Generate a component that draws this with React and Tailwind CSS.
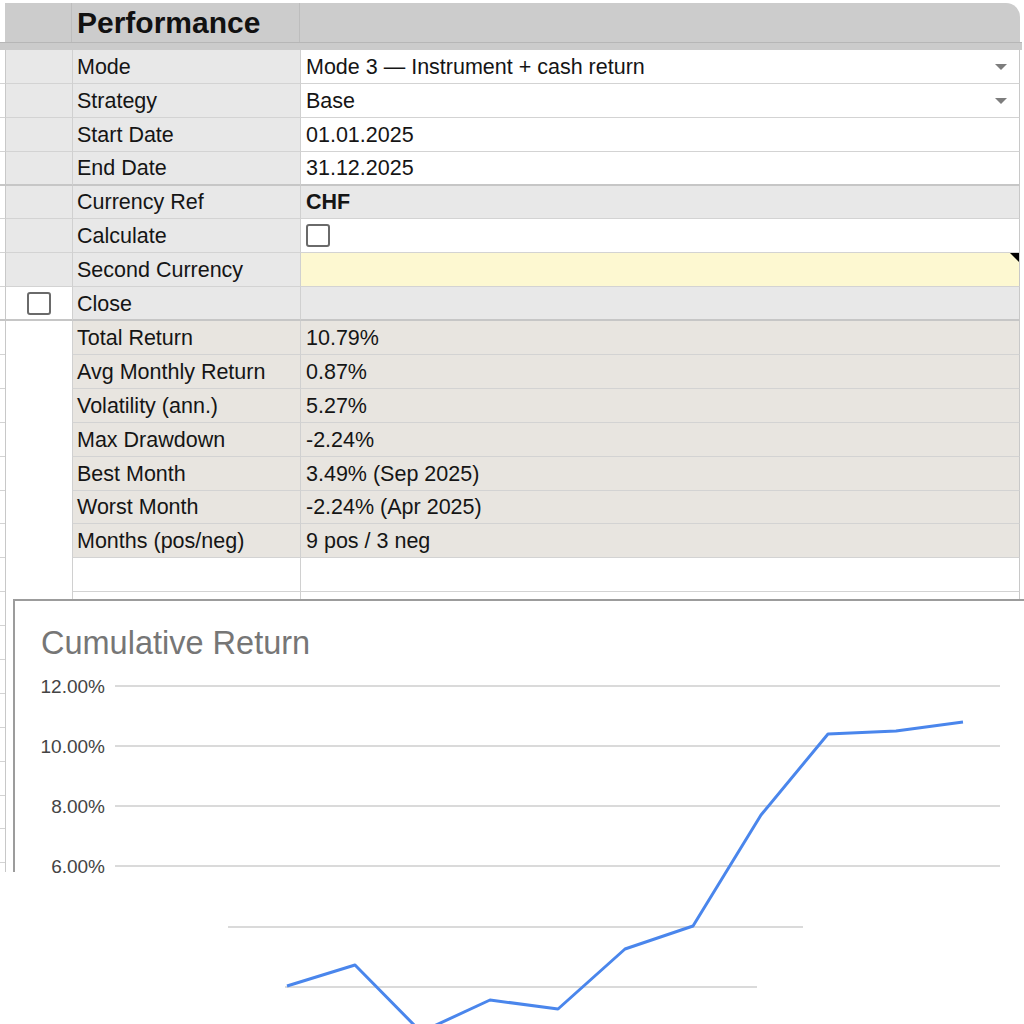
import React from 'react'

const FONT = "font-['Liberation_Sans',Arial,sans-serif]"

function Checkbox() {
  return <div className="h-[23px] w-[24px] rounded-[3px] border-2 border-[#6a6a6a] bg-white" />
}

function Caret() {
  return <div className="h-0 w-0 border-x-[6px] border-t-[6px] border-x-transparent border-t-[#7d7d7d]" />
}

// one sheet row: edge tick | gutter | label col | value col | right margin
function Row({ gutterBg = 'bg-white', gutterLine = true, gutter, labelBg = 'bg-white', valueBg = 'bg-white', line = 'border-b border-b-[#d3d3d3]', label, children, caret, corner }) {
  return (
    <div className="flex h-[33.9px] shrink-0">
      <div className={`w-[5px] shrink-0 ${line}`} />
      <div className={`flex w-[67px] shrink-0 items-center justify-center border-l border-l-[#c8c8c8] ${gutterLine ? line : ''} ${gutterBg}`}>
        {gutter}
      </div>
      <div className={`flex w-[228px] shrink-0 items-center border-l border-l-[#d0d0d0] pl-[4px] pt-[1px] ${line} ${labelBg}`}>
        {label}
      </div>
      <div className={`relative flex w-[720px] shrink-0 items-center justify-between border-x border-l-[#d0d0d0] border-r-[#c8c8c8] pl-[5px] pr-[12px] pt-[1px] ${line} ${valueBg}`}>
        <div className="flex items-center">{children}</div>
        {caret && <Caret />}
        {corner && (
          <div className="absolute right-0 top-0 h-0 w-0 border-l-[9px] border-t-[9px] border-l-transparent border-t-black" />
        )}
      </div>
      <div className="w-[4px] shrink-0" />
    </div>
  )
}

const GRAY = 'bg-[#e8e8e8]'
const BEIGE = 'bg-[#e8e5e0]'
const YELLOW = 'bg-[#fdf8d1]'
const THICK = 'border-b-2 border-b-[#c6c6c6]'

const stats = [
  ['Total Return', '10.79%'],
  ['Avg Monthly Return', '0.87%'],
  ['Volatility (ann.)', '5.27%'],
  ['Max Drawdown', '-2.24%'],
  ['Best Month', '3.49% (Sep 2025)'],
  ['Worst Month', '-2.24% (Apr 2025)'],
  ['Months (pos/neg)', '9 pos / 3 neg'],
]

function Chart() {
  const pts = [
    [287, 986], [355, 965], [421, 1032], [490, 1000], [558, 1009], [625, 949],
    [693, 926], [761, 815], [828, 734], [896, 731], [963, 722],
  ]
  const grid = [
    ['12.00%', 686],
    ['10.00%', 746],
    ['8.00%', 806],
    ['6.00%', 866],
  ]
  return (
    <div className="absolute left-[13px] top-[599px] h-[425px] w-[1011px] border-t-2 border-t-[#9c9c9c] bg-white">
      <svg className="absolute left-0 top-0" width="1011" height="423" viewBox="13 601 1011 423">
        {grid.map(([t, y]) => (
          <g key={t}>
            <line x1="115" x2="1000" y1={y} y2={y} stroke="#dadada" strokeWidth="2" />
            <text x="105" y={y + 7} textAnchor="end" fontSize="19" fill="#444" fontFamily="Liberation Sans, Arial, sans-serif">
              {t}
            </text>
          </g>
        ))}
        <line x1="228" x2="803" y1="927" y2="927" stroke="#dadada" strokeWidth="2" />
        <line x1="285" x2="757" y1="987" y2="987" stroke="#dadada" strokeWidth="2" />
        <polyline points={pts.map((p) => p.join(',')).join(' ')} fill="none" stroke="#4a86ec" strokeWidth="3" strokeLinejoin="round" />
      </svg>
      <div className="absolute left-0 top-[-2px] h-[273px] w-[2px] bg-[#9c9c9c]" />
      <div className="relative pl-[28px] pt-[23px] text-[32.5px] leading-[38px] text-[#767676]">Cumulative Return</div>
    </div>
  )
}

export default function App() {
  return (
    <div className={`relative h-[1024px] w-[1024px] overflow-hidden bg-white text-[21.5px] text-[#151515] ${FONT}`}>
      <div className="flex h-[872px] flex-col overflow-hidden">
        <div className="h-[3px] shrink-0" />
        <div className="ml-[5px] flex h-[39px] w-[1015px] shrink-0 rounded-tr-[14px] bg-[#cccccc]">
          <div className="w-[67px] shrink-0 border-r border-r-[#bdbdbd]" />
          <div className="flex w-[228px] shrink-0 items-center border-r border-r-[#bdbdbd] pl-[5px] text-[30px] font-bold text-[#111]">
            Performance
          </div>
        </div>
        <div className="h-[8px] w-[1022px] shrink-0 border-t border-t-[#b6b6b6] bg-[#cbcbcb]" />

        <Row gutterBg={GRAY} labelBg={GRAY} label="Mode" caret>Mode 3 — Instrument + cash return</Row>
        <Row gutterBg={GRAY} labelBg={GRAY} label="Strategy" caret>Base</Row>
        <Row gutterBg={GRAY} labelBg={GRAY} label="Start Date">01.01.2025</Row>
        <Row gutterBg={GRAY} labelBg={GRAY} label="End Date" line={THICK}>31.12.2025</Row>
        <Row gutterBg={GRAY} labelBg={GRAY} valueBg={GRAY} label="Currency Ref">
          <span className="font-bold">CHF</span>
        </Row>
        <Row gutterBg={GRAY} labelBg={GRAY} label="Calculate">
          <div className="-mt-[1px]"><Checkbox /></div>
        </Row>
        <Row gutterBg={GRAY} labelBg={GRAY} valueBg={YELLOW} label="Second Currency" corner />
        <Row gutter={<Checkbox />} labelBg={GRAY} valueBg={GRAY} label="Close" line={THICK} />
        {stats.map(([l, v]) => (
          <Row key={l} gutterLine={false} labelBg={BEIGE} valueBg={BEIGE} label={l}>
            {v}
          </Row>
        ))}
        {Array.from({ length: 10 }).map((_, i) => (
          <Row key={i} gutterLine={false} />
        ))}
      </div>
      <Chart />
    </div>
  )
}
